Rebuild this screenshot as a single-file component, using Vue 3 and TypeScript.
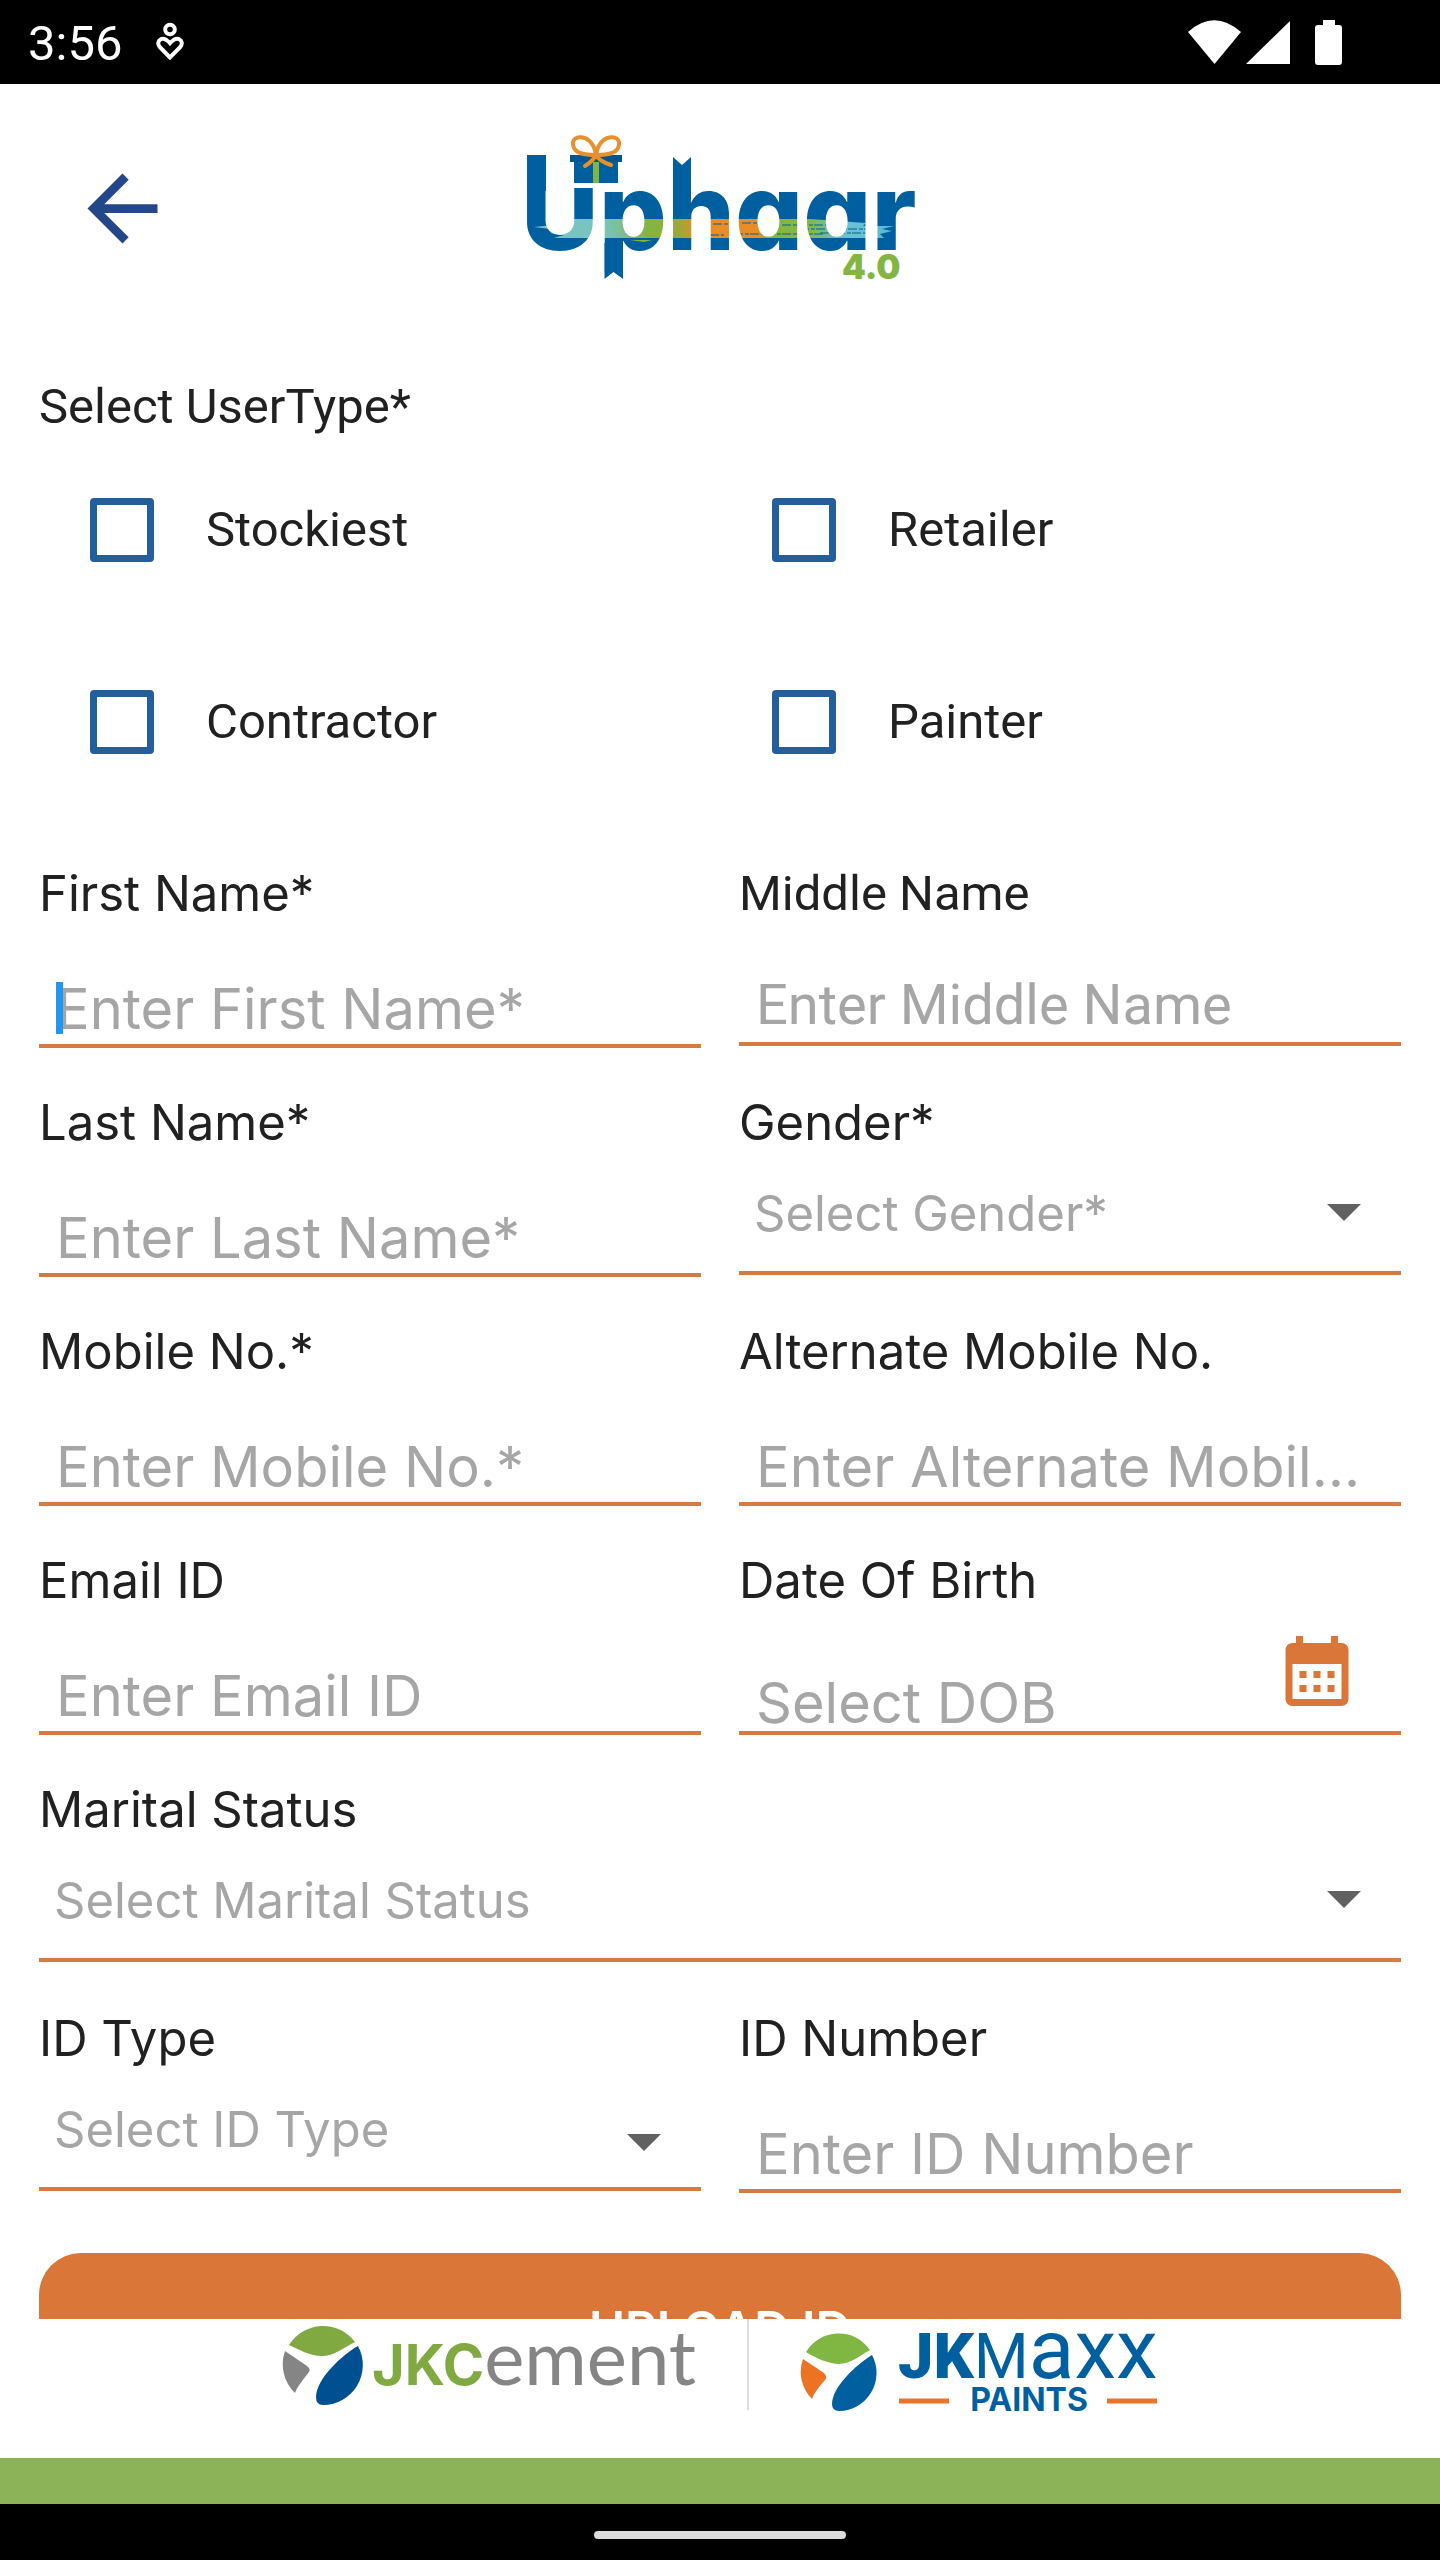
<script setup lang="ts">
import { ref } from 'vue'

interface Field {
  id: string
  label: string
  hint: string
  kind: 'text' | 'select' | 'date'
  roboto?: boolean
  wide?: boolean
  lowArrow?: boolean
  caret?: boolean
}

const userTypes = ['Stockiest', 'Retailer', 'Contractor', 'Painter']
const selected = ref<string[]>([])

const fields: Field[] = [
  { id: 'first-name', label: 'First Name*', hint: 'Enter First Name*', kind: 'text', caret: true },
  { id: 'middle-name', label: 'Middle Name', hint: 'Enter Middle Name', kind: 'text', roboto: true },
  { id: 'last-name', label: 'Last Name*', hint: 'Enter Last Name*', kind: 'text' },
  { id: 'gender', label: 'Gender*', hint: 'Select Gender*', kind: 'select' },
  { id: 'mobile', label: 'Mobile No.*', hint: 'Enter Mobile No.*', kind: 'text' },
  { id: 'alt-mobile', label: 'Alternate Mobile No.', hint: 'Enter Alternate Mobile No.', kind: 'text' },
  { id: 'email', label: 'Email ID', hint: 'Enter Email ID', kind: 'text' },
  { id: 'dob', label: 'Date Of Birth', hint: 'Select DOB', kind: 'date' },
  { id: 'marital', label: 'Marital Status', hint: 'Select Marital Status', kind: 'select', wide: true },
  { id: 'id-type', label: 'ID Type', hint: 'Select ID Type', kind: 'select', lowArrow: true },
  { id: 'id-number', label: 'ID Number', hint: 'Enter ID Number', kind: 'text' },
]
</script>

<template>
  <div class="screen">
    <div class="status-bar">
      <div class="status-left">
        <span class="clock">3:56</span>
        <svg viewBox="0 0 28 40" width="28" height="40" aria-hidden="true">
          <g fill="none" stroke="#fff" stroke-width="4">
            <circle cx="14" cy="7.5" r="4.8" />
            <path d="M14 35.5 3.9 25.2C1.2 22 2 18.600 4.800 17.200 8 15.700 10.600 17.400 14 21.200 17.400 17.400 20 15.700 23.200 17.200 26 18.600 26.800 22 24.100 25.200Z" />
          </g>
        </svg>
      </div>
      <svg viewBox="0 0 156 48" width="156" height="48" fill="#fff" aria-hidden="true">
        <path d="M1 14Q27-9.500 54 14L27.500 46Z" />
        <path d="M103 3V46H59Z" />
        <path d="M136 2h12v5h4q3 0 3 3v34q0 3-3 3h-21q-3 0-3-3V10q0-3 3-3h5z" />
      </svg>
    </div>

    <header class="app-header">
      <button class="back" type="button" aria-label="Back">
        <svg viewBox="0 0 24 24" width="105" height="105" fill="#24478a">
          <path d="M20 11H7.830l5.590-5.590L12 4l-8 8 8 8 1.410-1.410L7.830 13H20v-2z" />
        </svg>
      </button>
      <svg viewBox="0 0 400 160" width="400" height="160" role="img" aria-label="Uphaar 4.0">
        <defs>
          <linearGradient id="band" x1="0" x2="1" y1="0" y2="0">
            <stop offset="0.100" stop-color="#78c4c4" />
            <stop offset="0.200" stop-color="#78c4b8" />
            <stop offset="0.320" stop-color="#82b641" />
            <stop offset="0.400" stop-color="#9aa83a" />
            <stop offset="0.460" stop-color="#ea8d26" />
            <stop offset="0.620" stop-color="#ea8d26" />
            <stop offset="0.670" stop-color="#84b740" />
            <stop offset="0.760" stop-color="#84b740" />
            <stop offset="0.860" stop-color="#6cc3d2" />
            <stop offset="1" stop-color="#5cb7d6" />
          </linearGradient>
          <pattern id="paint" patternUnits="userSpaceOnUse" width="400" height="160">
            <rect width="400" height="160" fill="#005f9e" />
            <path d="M25 91H290L346 95 343 98H374L362 101 372 103 360 106 364 110H34L44 107 30 105 38 102 14 99 34 97Z" fill="url(#band)" />
            <path d="M193 96h22M222 95h26M262 97h60M280 101h68M300 105h52M214 106h90M190 107h14" stroke="#005f9e" stroke-width="1" stroke-dasharray="9 2 4 1" />
            <path d="M110 112h22l-8 2z" fill="#82b641" />
          </pattern>
        </defs>
        <text class="uphaar-word" x="1" y="122" fill="url(#paint)">Uphaar</text>
        <rect x="52" y="40" width="46" height="20" fill="#fff" />
        <rect x="7" y="27" width="19" height="36" fill="#005f9e" />
        <rect x="54" y="33" width="44" height="22" fill="#005f9e" />
        <rect x="50" y="27" width="52" height="7" fill="#00568f" />
        <rect x="73" y="34" width="6" height="21" fill="#82b641" />
        <path d="M153 29 162 37 171 29V72H153Z" fill="#005f9e" />
        <path d="M84.500 115V151L93.500 144 103 151V115Z" fill="#005f9e" />
        <g fill="none" stroke="#e8902c" stroke-width="4" stroke-linecap="round">
          <path d="M76 27C74 14 66 8 58 9.500 50 11 52 22 60 25 66 27 72 27 76 27 80 27 86 27 92 25 100 22 102 11 94 9.500 86 8 78 14 76 27" />
          <path d="M65 38Q73 33 76 27 79 33 91 37" />
        </g>
        <text class="uphaar-version" x="322" y="151" fill="#82b541">4.0</text>
      </svg>
    </header>

    <main class="content">
      <form @submit.prevent>
        <fieldset class="user-types">
          <legend>Select UserType*</legend>
          <div class="options">
            <label v-for="type in userTypes" :key="type" class="option">
              <input v-model="selected" type="checkbox" :value="type" />
              <span>{{ type }}</span>
            </label>
          </div>
        </fieldset>

        <div class="fields">
          <div
            v-for="field in fields"
            :key="field.id"
            class="field"
            :class="{ wide: field.wide, roboto: field.roboto }"
          >
            <label :for="field.id">{{ field.label }}</label>
            <div class="control" :class="[field.kind, { 'low-arrow': field.lowArrow }]">
              <select v-if="field.kind === 'select'" :id="field.id">
                <option value="">{{ field.hint }}</option>
              </select>
              <input v-else :id="field.id" type="text" :placeholder="field.hint" />
              <svg v-if="field.kind === 'select'" class="arrow" viewBox="0 0 34 17" width="34" height="17" aria-hidden="true">
                <path d="M0 0H34L17 17Z" fill="#616161" />
              </svg>
              <button v-if="field.kind === 'date'" class="calendar" type="button" aria-label="Pick a date">
                <svg viewBox="0 0 24 24" width="84" height="84" fill="#da7637">
                  <path fill-rule="evenodd" d="M19 4h-1V2h-2v2H8V2H6v2H5c-1.110 0-1.990.9-1.990 2L3 20c0 1.100.89 2 2 2h14c1.100 0 2-.9 2-2V6c0-1.100-.9-2-2-2zm0 16H5V10h14v10zM9 14H7v-2h2v2zm4 0h-2v-2h2v2zm4 0h-2v-2h2v2zm-8 4H7v-2h2v2zm4 0h-2v-2h2v2zm4 0h-2v-2h2v2z" />
                </svg>
              </button>
              <span v-if="field.caret" class="caret"></span>
            </div>
          </div>
        </div>

        <button class="upload" type="button">UPLOAD ID</button>
      </form>
    </main>

    <footer class="brands">
      <svg viewBox="0 0 422 90" width="422" height="90" role="img" aria-label="JKCement">
        <path d="M7 22A40 40 0 0 1 73 19C61 25 52 33 40 33 28 33 18 27 7 22Z" fill="#80a942" />
        <path d="M3 28 25 43Q29 46 27 49C22 56 16 62 13 70A40 40 0 0 1 3 28Z" fill="#858585" />
        <path d="M76 23C60 32 34 56 34 74Q34 82 41 82A40 40 0 0 0 76 23Z" fill="#004f90" />
        <text x="90" y="62" class="cement-jk" fill="#80a942">JKC<tspan class="cement-rest" fill="#858585">ement</tspan></text>
      </svg>
      <span class="divider"></span>
      <svg viewBox="0 0 358 90" width="358" height="90" role="img" aria-label="JKMaxx Paints">
        <path d="M6 29A38 38 0 0 1 70 27C61 32 50 41 39 41 28 41 14 34 6 29Z" fill="#80b742" />
        <path d="M3 36 24 50Q28 54 25 57C19 64 14 70 12 76A38 38 0 0 1 3 36Z" fill="#ec7324" />
        <path d="M72 32C56 42 32 64 32 81Q32 88 39 88A38 38 0 0 0 72 32Z" fill="#005f9f" />
        <g fill="#005f9f">
          <text x="98" y="55" class="maxx-jk">JK<tspan class="maxx-m">M</tspan><tspan class="maxx-rest">axx</tspan></text>
          <text x="229" y="88" class="maxx-paints" text-anchor="middle">PAINTS</text>
        </g>
        <path d="M99 78H149M307 78H357" stroke="#ec7324" stroke-width="5" />
      </svg>
    </footer>
    <div class="green-strip"></div>
    <div class="nav-bar"><span class="nav-pill"></span></div>
  </div>
</template>

<style>
body {
  margin: 0;
  background: #fff;
}
</style>

<style scoped>
.screen {
  display: flex;
  flex-direction: column;
  height: 100vh;
  background: #fff;
  color: #212121;
  font-family: Inter, 'Noto Sans', sans-serif;
  font-size: 49px;
  line-height: 60px;
}

button,
input,
select {
  margin: 0;
  padding: 0;
  border: 0;
  border-radius: 0;
  background: none;
  font: inherit;
  outline: none;
}

svg {
  display: block;
}

.status-bar {
  display: flex;
  flex: none;
  align-items: center;
  justify-content: space-between;
  height: 84px;
  padding: 0 97px 0 28px;
  background: #000;
}

.status-left {
  display: flex;
  align-items: center;
  gap: 34px;
}

.clock {
  padding-top: 4px;
  color: #fff;
  font-family: Roboto, sans-serif;
}

.app-header {
  display: grid;
  flex: none;
  grid-template-columns: 1fr auto 1fr;
  align-items: center;
  padding: 44px 70px 89px;
}

.back {
  justify-self: start;
  height: 105px;
}

.uphaar-word {
  font-size: 107px;
  font-weight: 800;
  font-feature-settings: 'cv11';
}

.uphaar-version {
  font-size: 34px;
  font-weight: 900;
}

.content {
  flex: 1;
  min-height: 0;
  overflow-y: auto;
  padding: 0 39px;
  scrollbar-width: none;
}

.user-types {
  margin: 0;
  padding: 0;
  border: 0;
  font-family: Roboto, sans-serif;
}

.user-types legend {
  padding: 0;
}

.options {
  display: grid;
  grid-template-columns: 1fr 1fr;
  gap: 6px 2px;
}

.option {
  display: flex;
  align-items: center;
  gap: 52px;
  height: 186px;
  padding-left: 51px;
}

.option input {
  width: 64px;
  height: 64px;
  border: 7px solid #235f9c;
  border-radius: 4px;
  appearance: none;
}

.option input:checked {
  background: #235f9c;
}

.fields {
  display: grid;
  grid-template-columns: 1fr 1fr;
  gap: 45px 38px;
  margin-top: 49px;
}

.field {
  display: flex;
  flex-direction: column;
  min-width: 0;
  min-height: 184px;
}

.wide {
  grid-column: 1 / -1;
}

.control {
  position: relative;
  display: flex;
  box-sizing: border-box;
  height: 124px;
  border-bottom: 4px solid #d67a43;
}

.control input {
  flex: 1;
  min-width: 0;
  padding: 51px 17px 1px;
  color: #212121;
  font-size: 56px;
  line-height: 68px;
  text-overflow: ellipsis;
}

.control input::placeholder {
  color: #a6a6a6;
  opacity: 1;
}

.control.select {
  align-items: center;
  height: 122px;
}

.control select {
  flex: 1;
  min-width: 0;
  height: 100%;
  padding: 4px 15px 0;
  color: #a6a6a6;
  appearance: none;
}

.arrow {
  flex: none;
  margin-right: 40px;
  pointer-events: none;
}

.low-arrow .arrow {
  align-self: flex-end;
  margin-bottom: 36px;
}

.control.date input {
  padding: 64px 17px 0;
  line-height: 56px;
}

.calendar {
  flex: none;
  height: 84px;
  margin: 18px 42px 0 0;
}

.roboto {
  font-family: Roboto, sans-serif;
}

.roboto .control {
  height: 122px;
}

.roboto .control input {
  padding: 48px 17px 4px;
  line-height: 66px;
}

.caret {
  position: absolute;
  top: 58px;
  left: 17px;
  width: 7px;
  height: 52px;
  background: #2196f3;
}

.upload {
  width: 100%;
  height: 154px;
  margin-top: 60px;
  border-radius: 42px;
  background: #da7637;
  color: #fff;
  font-weight: 600;
}

.brands {
  display: flex;
  flex: none;
  justify-content: center;
  height: 139px;
  background: #fff;
}

.brands svg {
  margin-top: 4px;
}

.divider {
  width: 2px;
  height: 91px;
  margin: 0 51px 0 43px;
  background: #dcdcdc;
}

.cement-jk {
  font-size: 56px;
  font-weight: 700;
}

.cement-rest {
  font-family: Lato, sans-serif;
  font-size: 76px;
  font-weight: 400;
}

.maxx-jk {
  font-family: Roboto, sans-serif;
  font-size: 63px;
  font-weight: 900;
}

.maxx-m {
  font-weight: 400;
}

.maxx-rest {
  font-size: 84px;
  font-weight: 400;
}

.maxx-paints {
  font-size: 32px;
  font-weight: 700;
}

.green-strip {
  flex: none;
  height: 46px;
  background: #8cb357;
}

.nav-bar {
  display: flex;
  flex: none;
  align-items: center;
  justify-content: center;
  box-sizing: border-box;
  height: 56px;
  padding-top: 6px;
  background: #000;
}

.nav-pill {
  width: 252px;
  height: 8px;
  border-radius: 4px;
  background: #dcdcdc;
}
</style>
